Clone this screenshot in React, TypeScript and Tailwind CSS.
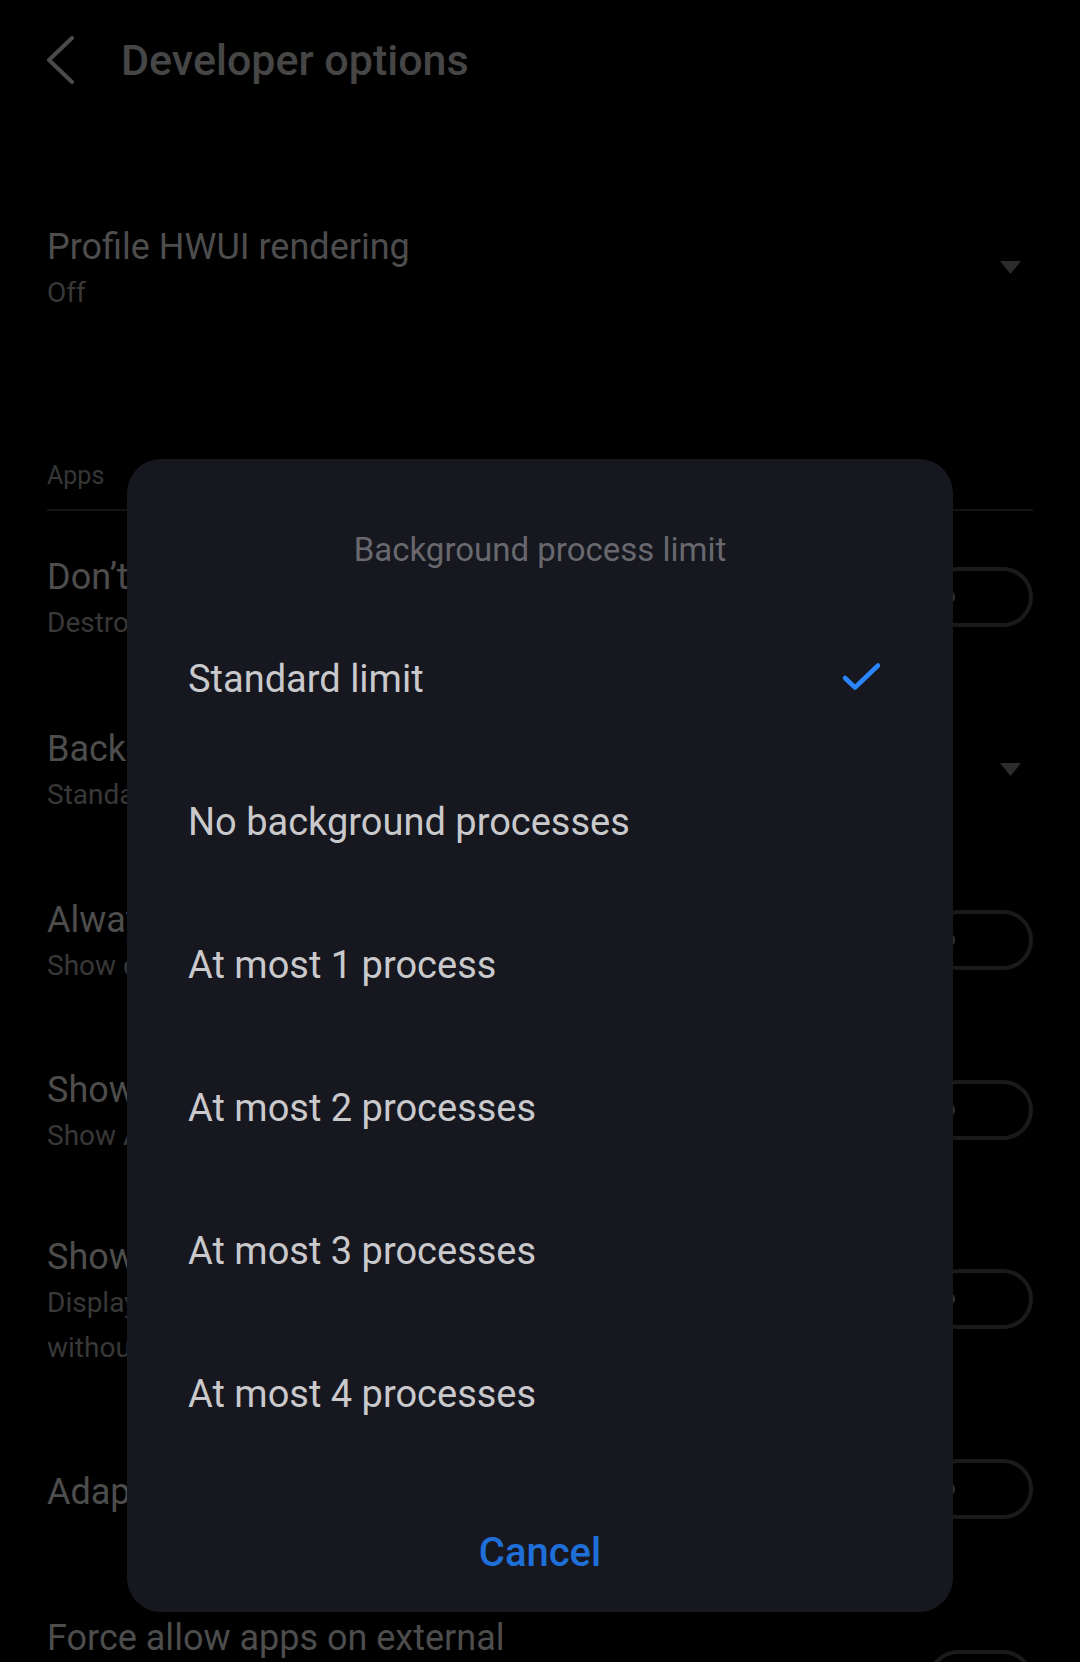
import React from "react";

function Toggle() {
  return (
    <div className="flex h-[60px] w-[105px] shrink-0 items-center rounded-full border-[4px] border-[#1a1a1a] pl-[9px]">
      <div className="h-[14px] w-[14px] rounded-full bg-[#333333]" />
    </div>
  );
}

function Triangle() {
  return (
    <svg width="21" height="13" viewBox="0 0 21 13" className="shrink-0">
      <polygon points="0,0 21,0 10.5,13" fill="#2c2c2c" />
    </svg>
  );
}

function TextBlock({ title, sub }: { title: React.ReactNode; sub?: React.ReactNode }) {
  return (
    <div className="mt-[6px] flex flex-col whitespace-nowrap">
      <div className="text-[36px] leading-[45px] text-[#4d4d4d]">{title}</div>
      {sub ? <div className="text-[28px] leading-[45px] text-[#383838]">{sub}</div> : null}
    </div>
  );
}

const items = [
  "Standard limit",
  "No background processes",
  "At most 1 process",
  "At most 2 processes",
  "At most 3 processes",
  "At most 4 processes",
];

export default function App() {
  return (
    <div className="relative h-[1662px] w-[1080px] overflow-hidden bg-black font-[family-name:Roboto,sans-serif]">
      {/* Header */}
      <div className="flex h-[119px] items-center pl-[45px]">
        <svg width="30" height="48" viewBox="0 0 30 48" className="shrink-0">
          <polyline
            points="27,2 4,24 27,46"
            fill="none"
            stroke="#4a4a4a"
            strokeWidth="4"
            strokeLinecap="round"
            strokeLinejoin="round"
          />
        </svg>
        <div className="ml-[46px] text-[43px] font-medium leading-[50px] text-[#464646]">
          Developer options
        </div>
      </div>

      {/* Profile HWUI rendering */}
      <div className="flex items-center justify-between pl-[47px] pr-[59px] pt-[100px]">
        <TextBlock title="Profile HWUI rendering" sub="Off" />
        <Triangle />
      </div>

      {/* Apps section header */}
      <div className="mx-[47px] mt-[146px] border-b-2 border-[#141414] pb-[18px]">
        <div className="text-[25px] leading-[30px] text-[#363636]">Apps</div>
      </div>

      {/* Rows */}
      <div className="flex h-[172px] items-center justify-between px-[47px]">
        <TextBlock title="Don’t keep activities" sub="Destroy every activity as soon as the user leaves it" />
        <Toggle />
      </div>
      <div className="flex h-[172px] items-center justify-between pl-[47px] pr-[59px]">
        <TextBlock title="Background process limit" sub="Standard limit" />
        <Triangle />
      </div>
      <div className="flex h-[170px] items-center justify-between px-[47px]">
        <TextBlock title="Always show crash dialog" sub="Show dialog every time app crashes" />
        <Toggle />
      </div>
      <div className="flex h-[170px] items-center justify-between px-[47px]">
        <TextBlock title="Show background ANRs" sub="Show App Not Responding dialog for background apps" />
        <Toggle />
      </div>
      <div className="flex h-[208px] items-center justify-between px-[47px]">
        <TextBlock
          title="Show notification channel warnings"
          sub={
            <>
              Display on-screen warning when an app posts a notification
              <br />
              without a valid channel
            </>
          }
        />
        <Toggle />
      </div>
      <div className="flex h-[172px] items-center justify-between px-[47px]">
        <TextBlock title="Adaptive notification priority" />
        <Toggle />
      </div>
      <div className="flex h-[210px] items-center justify-between px-[47px]">
        <TextBlock
          title={
            <>
              Force allow apps on external
              <br />
              storage
            </>
          }
          sub="Makes any app eligible to be written to external storage"
        />
        <Toggle />
      </div>

      {/* Dialog */}
      <div className="absolute left-[127px] top-[459px] flex h-[1153px] w-[826px] flex-col rounded-[34px] bg-[#16171f] pt-[68px]">
        <div className="text-center text-[33px] leading-[45px] text-[#68686e]">Background process limit</div>
        <div className="mt-[36px] flex flex-col">
          {items.map((it, i) => (
            <div key={it} className="flex h-[143px] items-center justify-between pl-[61px] pr-[71px]">
              <div className="text-[38px] leading-[45px] text-[#c9c9cc]">{it}</div>
              {i === 0 ? (
                <svg width="40" height="34" viewBox="0 0 40 34" className="shrink-0 overflow-visible">
                  <polyline
                    points="3,15 13,24.5 36,2.5"
                    fill="none"
                    stroke="#2a86ff"
                    strokeWidth="4.5"
                    strokeLinecap="round"
                    strokeLinejoin="round"
                  />
                </svg>
              ) : null}
            </div>
          ))}
        </div>
        <div className="pt-[64px] text-center text-[40px] font-medium leading-[45px] text-[#1f6fd8]">Cancel</div>
      </div>
    </div>
  );
}
